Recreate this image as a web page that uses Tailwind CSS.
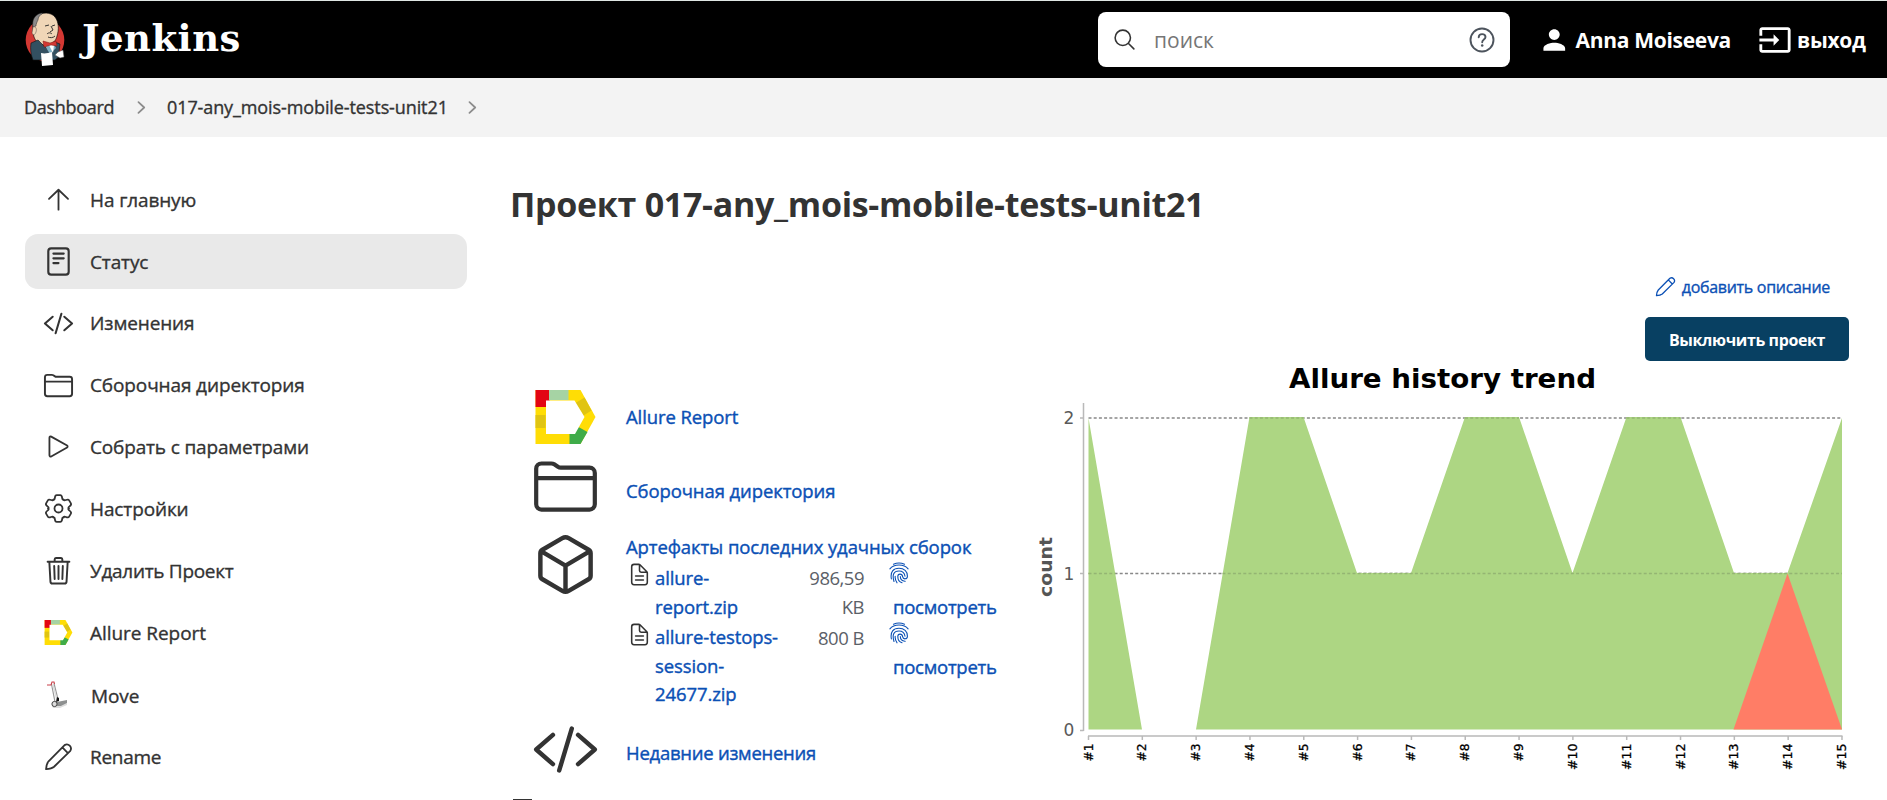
<!DOCTYPE html>
<html lang="ru">
<head>
<meta charset="utf-8">
<title>017-any_mois-mobile-tests-unit21 [Jenkins]</title>
<script src="https://cdn.jsdelivr.net/npm/@tailwindcss/browser@4"></script>
</head>
<body class="h-[800px] w-[1887px] overflow-hidden bg-white font-['Open_Sans','Noto_Sans',sans-serif] text-[19px] font-normal text-[#333] [-webkit-text-stroke-width:0.35px]">
<svg class="hidden">
  <defs>
    <symbol id="arrow-up" viewBox="0 0 512 512"><path d="M88 244 256 84l168 160M256 90v346" fill="none" stroke="currentColor" stroke-width="32" stroke-linecap="round" stroke-linejoin="round"/></symbol>
    <symbol id="reader" viewBox="0 0 512 512"><g fill="none" stroke="currentColor" stroke-width="38" stroke-linecap="round" stroke-linejoin="round"><rect x="76" y="24" width="360" height="464" rx="50"/><path d="M166 116h182M166 200h182M166 284h90"/></g></symbol>
    <symbol id="code" viewBox="0 0 512 512"><path d="M160 368 32 256l128-112M352 368l128-112-128-112M304 96l-96 320" fill="none" stroke="currentColor" stroke-width="34" stroke-linecap="round" stroke-linejoin="round"/></symbol>
    <symbol id="folder" viewBox="0 0 512 512"><path d="M440 432H72a40 40 0 0 1-40-40V120a40 40 0 0 1 40-40h75.890a40 40 0 0 1 22.190 6.720l27.840 18.560a40 40 0 0 0 22.190 6.720H440a40 40 0 0 1 40 40v240a40 40 0 0 1-40 40zM32 192h448" fill="none" stroke="currentColor" stroke-width="32" stroke-linecap="round" stroke-linejoin="round"/></symbol>
    <symbol id="play" viewBox="0 0 512 512"><path d="M96 101v310c0 17 17 28 31 20l281-158c12-7 12-27 0-34L127 81c-14-8-31 3-31 20z" fill="none" stroke="currentColor" stroke-width="32" stroke-linejoin="round"/></symbol>
    <symbol id="trash" viewBox="0 0 512 512"><g fill="none" stroke="currentColor" stroke-width="34" stroke-linecap="round" stroke-linejoin="round"><path d="m94 102 20 350c.95 18.490 14.400 34 32 34h220c17.670 0 30.870-15.510 32-34l20-350M64 102h384M188 102V62a28 28 0 0 1 24-28h88a28 28 0 0 1 24 28v40M256 176v230M180 176l8 230M332 176l-8 230"/></g></symbol>
    <symbol id="pencil" viewBox="0 0 28 28"><path d="M2 26.200c.2-3.200.9-5.900 2.400-7.600L19.900 3a4 4 0 0 1 5.500 5.500L9.700 23.900c-1.800 1.500-4.500 2.100-7.700 2.300zM17.700 5.200l5.400 5.500" fill="none" stroke="currentColor" stroke-width="1.750" stroke-linecap="round" stroke-linejoin="round"/></symbol>
    <symbol id="cube" viewBox="0 0 512 512"><path d="M448 341.370V170.610A32 32 0 0 0 432.110 143l-152-88.460a47.940 47.940 0 0 0-48.240 0L79.890 143A32 32 0 0 0 64 170.610v170.760A32 32 0 0 0 79.890 369l152 88.460a48 48 0 0 0 48.240 0l152-88.460A32 32 0 0 0 448 341.370zM69 154l187 110 187-110M256 464V264" fill="none" stroke="currentColor" stroke-width="34" stroke-linecap="round" stroke-linejoin="round"/></symbol>
    <symbol id="doc" viewBox="0 0 512 512"><path d="M416 221.250V416a48 48 0 0 1-48 48H144a48 48 0 0 1-48-48V96a48 48 0 0 1 48-48h98.750a32 32 0 0 1 22.620 9.370l141.260 141.260a32 32 0 0 1 9.370 22.620zM256 56v120a32 32 0 0 0 32 32h120M176 288h160M176 368h160" fill="none" stroke="currentColor" stroke-width="32" stroke-linecap="round" stroke-linejoin="round"/></symbol>
    <symbol id="finger" viewBox="0 0 20 22"><path d="M4.500 2.300C8 .6 12 .6 15.500 2.300M.9 6.800C5 1.800 15 1.800 19.100 6.800M2.400 17C1 9.500 4.500 6.200 10 6.200c5 0 8.600 3.200 8.400 8.200-.1 3-4.200 3.300-4.700.5-.3-1.800-1.300-2.800-2.700-2.800-1.300 0-2.200 1-2.200 2.400 0 3 1.600 5.500 4.200 6.300M5 19.500C3 13 4.600 9 10 9c3.600 0 5.600 2.200 6 5.200M8 20.800c-1.300-2-2.100-4.200-1.800-6.600M11.300 14.600c.1 2.700 2 4.700 4.900 4.600" fill="none" stroke="currentColor" stroke-width="1.100" stroke-linecap="round"/></symbol>
    <symbol id="chev" viewBox="0 0 8 12"><path d="m1.200 1 5.300 5-5.300 5" fill="none" stroke="#8c8c8c" stroke-width="1.600" stroke-linecap="round" stroke-linejoin="round"/></symbol>
    <symbol id="allure" viewBox="0 0 60 54">
      <path d="M0 0h45l15 27-15 27H0z" fill="#ffdd05"/><path d="M0 0h14v17H0z" fill="#e30613"/><path d="M13.500 0H33v10H13.500z" fill="#a6d3a4"/><path d="M0 25h10v13H0z" fill="#e0c412"/><path d="m40 13 9-5.500 7 13-8 5z" fill="#e0c412"/><path d="M34 54V43h5l4-6 9 5-7 12z" fill="#3fac49"/><path d="M10.500 10.500h28.500L49 27l-9.500 17h-29z" fill="#fff"/>
    </symbol>
    <path id="tooth" d="M-5.150-8.900c.9.300 1.300-.2 1.500-1.700.2-1.800.7-2.700 1.900-2.700H1.750c1.200 0 1.700.9 1.900 2.700.2 1.500.6 2 1.500 1.700"/>
  </defs>
</svg>

<header class="flex h-[78px] items-center border-t border-[#dfe6e3] bg-black pl-[25px] text-[21px] font-bold text-white [-webkit-text-stroke-width:0]">
  <a class="flex items-center gap-[16px]">
    <svg class="h-[56px] w-[41px]" viewBox="0 0 41 56">
      <ellipse cx="20" cy="28" rx="19.300" ry="21" fill="#d33833"/>
      <path d="M9 25C7 17 7 8 12 4c5-4 14-4 18 1 4 5 4 13 2 19-1 5-5 8-9 9-6 1-12-2-14-8z" fill="#f0d6b7" stroke="#000" stroke-width=".6"/>
      <path d="M8 15c-1-6 1-10 4-12 2-1.500 4-2 6-2-3 2-5 4-5 7-1 2-2 4-2 6z" fill="#8b8a8a" stroke="#222" stroke-width=".5"/>
      <path d="M8 15c3-1 4 2 3 5s-3 4-4 1z" fill="#f0d6b7" stroke="#333" stroke-width=".4"/>
      <path d="M20 14l4-1M27 14l3-1M26 14l2 4-3 2M22 22c2-2 4-1 5 0M23 25c2 1 5 1 7-1" fill="none" stroke="#222" stroke-width=".9"/>
      <path d="m6 31 7-3 9 9 8-7 5 2-1 8 1 4-5 4H16L8 48c-2-5-3-11-2-17z" fill="#335061" stroke="#111" stroke-width=".6"/>
      <path d="m20 34 5 8 6-6-2-4z" fill="#81b0c4"/><path d="m24 33 4 8 1-8z" fill="#fff"/>
      <path d="m18 29 7 2 6-2 1 5-6-1-7 2z" fill="#d33833" stroke="#7a1612" stroke-width=".5"/>
      <path d="M16 41c4 1 7 0 11-1l1 13-11 1z" fill="#fff"/>
      <path d="M30 43l3-3 5-2 1 7-4 1z" fill="#fff" stroke="#555" stroke-width=".5"/>
    </svg>
    <span class="-mt-[4px] font-['DejaVu_Serif',serif] text-[37px] leading-[48px] tracking-[0.5px]">Jenkins</span>
  </a>
  <div class="ml-auto flex h-[55px] w-[412px] items-center rounded-[8px] bg-white px-[15px] font-normal text-[#767676]">
    <svg class="-ml-px size-[25px] text-[#333]" viewBox="0 0 512 512"><path d="M221.090 64a157.090 157.090 0 1 0 157.090 157.090A157.100 157.100 0 0 0 221.090 64zM338.290 338.290 448 448" fill="none" stroke="currentColor" stroke-width="32" stroke-linecap="round"/></svg>
    <span class="mt-[2px] ml-[17px]">поиск</span>
    <svg class="ml-auto size-[26px] text-[#4d545d]" viewBox="0 0 26 26"><circle cx="13" cy="13" r="11.500" fill="none" stroke="currentColor" stroke-width="1.900"/><path d="M9.700 10.300c.1-2 1.500-3.200 3.400-3.200 2 0 3.400 1.200 3.400 2.900 0 2.600-3.300 2.500-3.300 5.200" fill="none" stroke="currentColor" stroke-width="1.900" stroke-linecap="round"/><circle cx="13.200" cy="18.600" r="1.250" fill="currentColor"/></svg>
  </div>
  <a class="ml-[28px] flex w-[193px] items-center whitespace-nowrap">
    <svg class="size-[34px]" viewBox="0 0 24 24" fill="#fff"><path d="M12 12c2.210 0 4-1.790 4-4s-1.790-4-4-4-4 1.790-4 4 1.790 4 4 4zm0 2c-2.670 0-8 1.340-8 4v2h16v-2c0-2.660-5.330-4-8-4z"/></svg>
    <span class="mt-[2px] ml-[5px] tracking-[-0.3px]">Anna Moiseeva</span>
  </a>
  <a class="ml-[27px] flex w-[129px] items-center">
    <svg class="size-[34px]" viewBox="0 0 24 24" fill="#fff"><path d="M21 3.010H3c-1.100 0-2 .9-2 2V9h2V4.990h18v14.030H3V15H1v4.010c0 1.100.9 1.980 2 1.980h18c1.100 0 2-.88 2-1.980v-14c0-1.110-.9-2-2-2zM11 16l4-4-4-4v3H1v2h10v3z"/></svg>
    <span class="mt-[2px] ml-[5px] tracking-[-0.3px]">выход</span>
  </a>
</header>

<nav class="flex h-[59px] items-center bg-[#f3f3f3] pl-[24px] text-[18px]">
  <span class="w-[91px] tracking-[-0.3px]">Dashboard</span>
  <svg class="ml-[22px] h-[13px] w-[9px]"><use href="#chev"/></svg>
  <span class="ml-[21px] w-[280px] tracking-[-0.1px] whitespace-nowrap">017-any_mois-mobile-tests-unit21</span>
  <svg class="ml-[21px] h-[13px] w-[9px]"><use href="#chev"/></svg>
</nav>

<div class="flex">
  <aside class="flex w-[467px] shrink-0 flex-col gap-[6.850px] pt-[35px] pl-[25px] tracking-[-0.12px]">
    <a class="flex h-[55px] items-center gap-[17px] pl-[19px]"><svg class="size-[29px]"><use href="#arrow-up"/></svg><span class="mt-[2px]">На главную</span></a>
    <a class="flex h-[55px] items-center gap-[17px] rounded-[13px] bg-[#e9e9e9] pl-[19px]"><svg class="size-[29px]"><use href="#reader"/></svg><span class="mt-[2px]">Статус</span></a>
    <a class="flex h-[55px] items-center gap-[17px] pl-[19px]"><svg class="-mx-px size-[31px]"><use href="#code"/></svg><span class="mt-px">Изменения</span></a>
    <a class="flex h-[55px] items-center gap-[17px] pl-[19px]"><svg class="-mx-px size-[31px]"><use href="#folder"/></svg><span class="mt-px">Сборочная директория</span></a>
    <a class="flex h-[55px] items-center gap-[17px] pl-[19px]"><svg class="size-[29px]"><use href="#play"/></svg><span class="mt-px tracking-[-0.16px]">Собрать с параметрами</span></a>
    <a class="flex h-[55px] items-center gap-[17px] pl-[19px]"><svg class="size-[29px]" viewBox="-14.500 -14.500 29 29"><g fill="none" stroke="currentColor" stroke-width="1.800" stroke-linecap="round"><use href="#tooth"/><use href="#tooth" transform="rotate(60)"/><use href="#tooth" transform="rotate(120)"/><use href="#tooth" transform="rotate(180)"/><use href="#tooth" transform="rotate(240)"/><use href="#tooth" transform="rotate(300)"/><circle r="4"/></g></svg><span class="mt-[2px]">Настройки</span></a>
    <a class="flex h-[55px] items-center gap-[17px] pl-[19px]"><svg class="size-[29px]"><use href="#trash"/></svg><span class="mt-[2px] tracking-[-0.3px]">Удалить Проект</span></a>
    <a class="flex h-[55px] items-center gap-[17px] pl-[19px]"><svg class="h-[25px] w-[29px]"><use href="#allure"/></svg><span class="mt-[2px] tracking-[-0.05px]">Allure Report</span></a>
    <a class="flex h-[55px] items-center gap-[17px] pl-[19px]"><svg class="size-[29px]" viewBox="0 0 29 29">
      <path d="M8 26h9l6-3v2l-7 3H9z" fill="#ddd"/>
      <path d="M7.500 4 11 22M10 3.500l4 16" fill="none" stroke="#999" stroke-width="1.200"/><path d="m9 5 4 15" stroke="#ddd" stroke-width="1.500"/>
      <path d="M3 5h4l1-3h2l.5 2" fill="none" stroke="#c9404a" stroke-width="1.100"/>
      <path d="m13 22 10-2v3l-6 3h-5z" fill="#8e9090"/><path d="m13 17 2 1v3l-3 1z" fill="#111"/>
      <circle cx="10.500" cy="24" r="2.600" fill="#ddd" stroke="#444" stroke-width="1"/>
    </svg><span class="mt-[3px] ml-px">Move</span></a>
    <a class="flex h-[55px] items-center gap-[17px] pl-[19px]"><svg class="size-[29px]"><use href="#pencil"/></svg><span class="mt-[2px] tracking-[-0.3px]">Rename</span></a>
  </aside>

  <main class="flex h-[663px] w-[1382px] flex-col pl-[44px]">
    <h1 class="mt-[43px] -ml-px h-[48px] text-[34px] leading-[48px] font-bold tracking-[-0.29px] whitespace-nowrap [-webkit-text-stroke-width:0]">Проект 017-any_mois-mobile-tests-unit21</h1>
    <div class="flex">
      <div class="mt-[152px] ml-px flex w-[500px] shrink-0 flex-col text-[18.500px] tracking-[-0.1px] whitespace-nowrap text-[#0b50b5] [-webkit-text-stroke-width:0.4px]">
        <div class="flex h-[74px] items-center pl-[23px]">
          <svg class="h-[54px] w-[61px]"><use href="#allure"/></svg><span class="ml-[30px]">Allure Report</span>
        </div>
        <div class="flex h-[74px] items-center pl-[20px]">
          <svg class="-mt-[10px] size-[67px] text-[#333]"><use href="#folder"/></svg><span class="ml-[27px]">Сборочная директория</span>
        </div>
        <div class="flex pl-[20px]">
          <svg class="mt-[3px] size-[67px] shrink-0 text-[#333]"><use href="#cube"/></svg>
          <div class="ml-[27px] w-[385px] leading-[29px]">
            <div class="mt-[4px] h-[31px]">Артефакты последних удачных сборок</div>
            <div class="flex h-[60px]">
              <svg class="-mt-px ml-px size-[25px] text-[#333]"><use href="#doc"/></svg>
              <div class="ml-[3px] w-[130px]">allure-<br>report.zip</div>
              <div class="w-[79px] text-right tracking-[-0.5px] text-[#5b6067] [-webkit-text-stroke-width:0]">986,59<br>KB</div>
              <div class="ml-[25px]"><svg class="-mt-px h-[22px] w-[20px]"><use href="#finger"/></svg><div class="mt-[8px] ml-[4px] tracking-[-0.25px]">посмотреть</div></div>
            </div>
            <div class="flex h-[89px]">
              <svg class="-mt-px ml-px size-[25px] text-[#333]"><use href="#doc"/></svg>
              <div class="ml-[3px] w-[130px] leading-[28.700px]">allure-testops-<br>session-<br>24677.zip</div>
              <div class="w-[79px] text-right tracking-[-0.5px] text-[#5b6067] [-webkit-text-stroke-width:0]">800 B</div>
              <div class="ml-[25px]"><svg class="-mt-px h-[22px] w-[20px]"><use href="#finger"/></svg><div class="mt-[8px] ml-[4px] tracking-[-0.25px]">посмотреть</div></div>
            </div>
          </div>
        </div>
        <div class="flex h-[74px] items-center pl-[20px]">
          <svg class="size-[67px] text-[#333]"><use href="#code"/></svg><span class="mt-[8px] ml-[27px] tracking-[-0.26px]">Недавние изменения</span>
        </div>
      </div>
      <div class="flex w-[837px] shrink-0 flex-col items-end">
        <a class="mt-[42px] mr-[19px] flex h-[34px] items-center text-[16px] tracking-[-0.3px] text-[#0b50b5]"><svg class="mr-[6px] -mt-[2px] size-[21px]"><use href="#pencil"/></svg><span>добавить описание</span></a>
        <button class="mt-[13px] flex h-[44px] w-[204px] items-center justify-center rounded-[5px] bg-[#084062] pt-px text-[16px] font-bold tracking-[-0.38px] text-white [-webkit-text-stroke-width:0]">Выключить проект</button>
        <svg class="-mr-[18px] h-[440px] w-[837px] shrink-0 font-['DejaVu_Sans',sans-serif] [-webkit-text-stroke-width:0]" viewBox="1030 360 837 440">
          <text x="1289" y="387" textLength="307" lengthAdjust="spacingAndGlyphs" font-size="26.500" font-weight="bold" fill="#000">Allure history trend</text>
          <g stroke="#888" stroke-width="1.500" stroke-dasharray="3 2.200"><path d="M1088.500 417H1842M1088.500 572.500H1842"/></g>
          <path d="M1088.500 728.500V417L1142 728.500ZM1196 728.500 1249.500 416H1303.500L1357 572H1411L1465 416H1519L1572.500 572 1626.500 416H1680.500L1734 572H1787.500L1842 417V728.500Z" fill="#add683"/>
          <path d="M1088.500 572.500H1115.500M1222.500 572.500H1842M1249.500 417H1303.500M1465 417H1519M1626.500 417H1680.500" stroke="#94b573" stroke-width="1.500" stroke-dasharray="3 2.200"/>
          <path d="M1733.500 728.500 1787.500 572.500 1842 728.500Z" fill="#ff7d66"/>
          <g id="axes" fill="none" stroke="#b9b9b9" stroke-width="1.500"><path d="M1083.500 402V730M1080 417h3.500M1080 572.500h3.500M1080 729.500h3.500M1088 735H1842.500"/></g>
          <g fill="#5a5a5a" font-size="17"><text x="1063.500" y="422.500">2</text><text x="1063.500" y="578.500">1</text><text x="1063.500" y="734.500">0</text></g>
          <text transform="translate(1052 596) rotate(-90)" textLength="60" lengthAdjust="spacingAndGlyphs" font-size="18" font-weight="bold" fill="#555">count</text>
          <g id="labels" fill="#000" stroke="#000" stroke-width=".3" font-size="13"></g>
        </svg>
      </div>
    </div>
  </main>
</div>
<div class="absolute top-[799px] left-[513px] h-px w-[19px] bg-[#333]"></div>
<script>
  // Build-number ticks and labels along the x axis
  const ns = 'http://www.w3.org/2000/svg';
  for (let i = 0; i < 15; i++) {
    const x = 1088.5 + i * 53.82;
    const tick = document.createElementNS(ns, 'path');
    tick.setAttribute('d', `M${x} 735v4`);
    document.getElementById('axes').append(tick);
    const t = document.createElementNS(ns, 'text');
    const long = i > 8;
    t.setAttribute('transform', `translate(${x + 4} ${long ? 769 : 760.5}) rotate(-90)`);
    t.setAttribute('textLength', long ? 26.5 : 18);
    t.setAttribute('lengthAdjust', 'spacingAndGlyphs');
    t.textContent = '#' + (i + 1);
    document.getElementById('labels').append(t);
  }
</script>
</body>
</html>
